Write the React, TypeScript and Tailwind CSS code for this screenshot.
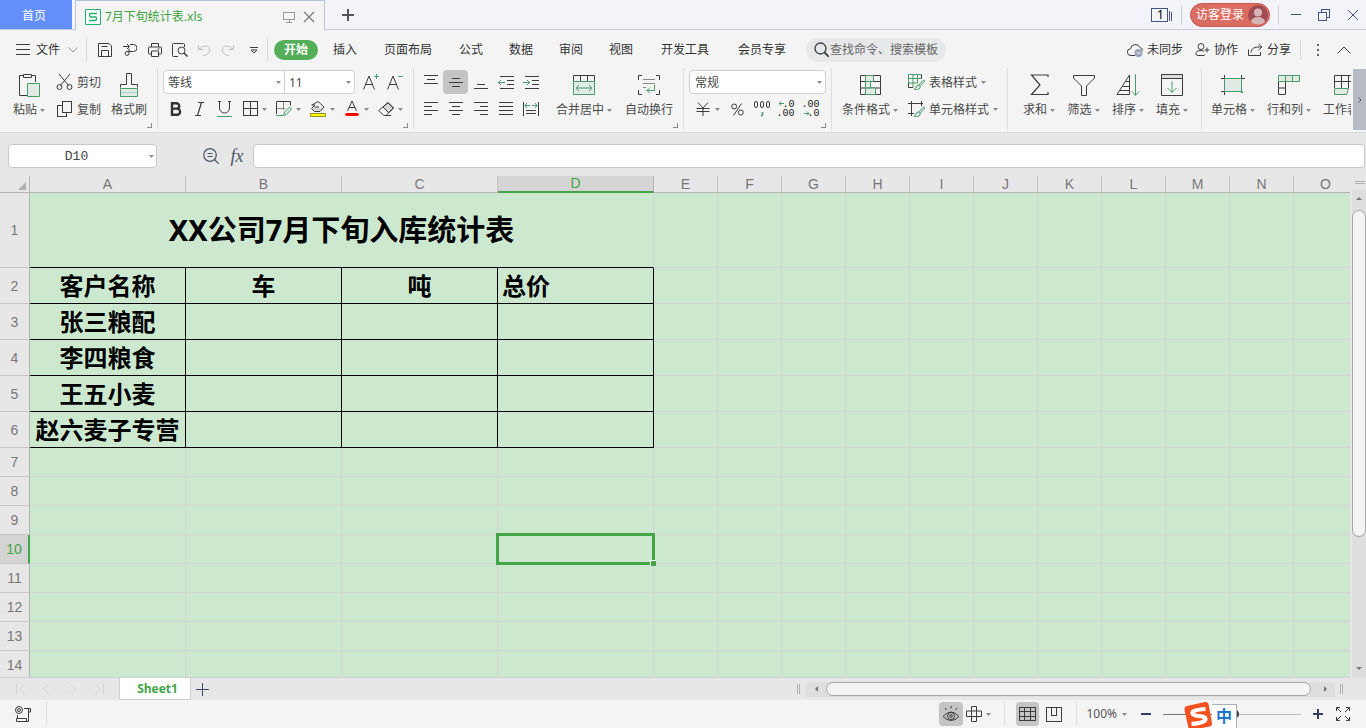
import React, { FC, ReactNode } from 'react';

import clsx from 'clsx';

const INK = '#3c3c3c';
const GREEN = '#4a9a6c';
const PALE = '#e1ebe5';

type SvgProps = {
  w: number;
  h: number;
  children: ReactNode;
  stroke?: string;
  crisp?: boolean;
  className?: string;
};

const Svg: FC<SvgProps> = ({
  w,
  h,
  children,
  stroke = INK,
  crisp,
  className,
}) => (
  <svg
    width={w}
    height={h}
    viewBox={`0 0 ${w} ${h}`}
    fill="none"
    stroke={stroke}
    shapeRendering={crisp ? 'crispEdges' : undefined}
    className={clsx('shrink-0', className)}
    aria-hidden="true"
  >
    {children}
  </svg>
);

const Caret: FC<{ className?: string }> = ({ className }) => (
  <Svg w={5} h={3} stroke="none" className={className}>
    <path d="M0 0h5L2.5 3z" fill="#8a8a8a" />
  </Svg>
);

const TitleBar = () => (
  <header className="flex h-[30px] shrink-0 border-b border-[#c5cbdc] bg-[#f2f4f9]">
    <button className="h-[29px] w-[72px] bg-[#638ffb] pt-[2px] pr-1 text-white">
      首页
    </button>
    <div className="ml-[3px] -mb-px flex h-[30px] w-[250px] items-center border-x border-t border-[#bcc3d6] bg-[#f4f4f4] pt-[3px] pr-2 pl-[9px]">
      <Svg w={16} h={16} stroke="#23b26d">
        <path d="M.5.5h15v15H.5z" fill="#fff" />
        <path
          d="M12 4.5H5.5Q4.5 4.5 4.5 6T5.5 8H10.5Q11.5 8 11.5 9.7T10.5 11.5H4"
          strokeWidth="1.4"
        />
      </Svg>
      <span className="ml-1 text-[#3fa33f]">7月下旬统计表.xls</span>
      <button aria-label="窗口" className="ml-auto">
        <Svg w={12} h={12} stroke="#999" crisp>
          <path d="M.5 1.5h11v7H.5zM6 9v2M3 11.5h6" />
        </Svg>
      </button>
      <button aria-label="关闭标签" className="ml-2 mr-px">
        <Svg w={12} h={12} stroke="#777">
          <path d="M1 1l10 10M11 1L1 11" strokeWidth="1.2" />
        </Svg>
      </button>
    </div>
    <button aria-label="新建" className="ml-[17px] pt-px">
      <Svg w={12} h={12} stroke="#555">
        <path d="M6 0v12M0 6h12" strokeWidth="2" shapeRendering="crispEdges" />
      </Svg>
    </button>
    <div className="ml-auto flex items-center pt-px">
      <button aria-label="窗口列表" className="relative">
        <Svg w={22} h={14} stroke="#44567f" crisp>
          <path d="M.5.5h16v13H.5zM18.5 3v10M20.5 4v9" />
        </Svg>
        <span className="absolute top-0 left-[6px] text-xs leading-[14px] text-black">
          1
        </span>
      </button>
      <i className="ml-2 h-5 w-px bg-[#cfcfd4]" />
      <button className="ml-2 flex h-6 w-20 items-center rounded-full border border-[#c9594f] bg-[#da6c61] pl-[5px] text-white">
        访客登录
        <Svg w={20} h={20} stroke="none" className="ml-1">
          <circle cx="10" cy="10" r="10" fill="#a04c52" />
          <circle cx="10" cy="7.5" r="4" fill="#d6b3b5" />
          <path d="M3 17a7 5 0 0 1 14 0a10 10 0 0 1-14 0z" fill="#d6b3b5" />
        </Svg>
      </button>
      <i className="ml-2 h-5 w-px bg-[#cfcfd4]" />
      <button aria-label="最小化" className="ml-3">
        <Svg w={10} h={12} stroke="#44567f" crisp>
          <path d="M0 5.5h10" />
        </Svg>
      </button>
      <button aria-label="还原" className="ml-[17px]">
        <Svg w={12} h={12} stroke="#44567f" crisp>
          <path d="M.5 3.5h8v8h-8zM3.5 3V.5h8v8H9" />
        </Svg>
      </button>
      <button aria-label="关闭" className="mr-[7px] ml-[17px]">
        <Svg w={12} h={12} stroke="#44567f">
          <path d="M1 1l10 10M11 1L1 11" />
        </Svg>
      </button>
    </div>
  </header>
);

const QuickTools = () => (
  <>
    <button aria-label="保存" className="w-[25px]">
      <Svg w={14} h={14}>
        <path d="M.5.5h10.5l2.5 2.5v10.5H.5zM3.5 13V7.5h7V13M3.5 3.5h6" />
      </Svg>
    </button>
    <button aria-label="输出为PDF" className="w-[25px]">
      <Svg w={14} h={14}>
        <path d="M0 3.5h6M4 1l2.5 2.5L4 6M7 1.5h3.5a3 3 0 0 1 0 7H4a2 2 0 1 0 2 2.5V5.5" />
      </Svg>
    </button>
    <button aria-label="打印" className="w-[25px]">
      <Svg w={14} h={14}>
        <path d="M3.5 4V.5h7V4M3.5 11H1.5q-1 0-1-1V5q0-1 1-1h11q1 0 1 1v5q0 1-1 1h-2M3.5 8h7v5.5h-7zM9.5 6h2" />
      </Svg>
    </button>
    <button aria-label="打印预览" className="w-[25px]">
      <Svg w={16} h={14}>
        <path d="M6 13.5H1.5q-1 0-1-1v-11q0-1 1-1h10q1 0 1 1V4" />
        <circle cx="9.5" cy="7.5" r="3.5" />
        <path d="M12 10l3.5 3.5" strokeWidth="1.5" />
      </Svg>
    </button>
    <button aria-label="撤销" className="w-6">
      <Svg w={12} h={12} stroke="#bdbdbd">
        <path d="M.5 1v4.5H5M1 5.5q3-4 7-3.5t3.5 4.5T5 12" />
      </Svg>
    </button>
    <button aria-label="恢复" className="w-6">
      <Svg w={12} h={12} stroke="#bdbdbd">
        <path d="M11.5 1v4.5H7M11 5.5Q8 1.5 4 2T.5 6.5 7 12" />
      </Svg>
    </button>
    <button aria-label="更多" className="ml-[10px] pr-2">
      <Svg w={8} h={8}>
        <path d="M0 1.5h8M1 4l3 3 3-3z" />
      </Svg>
    </button>
  </>
);

const MENU_ITEMS = [
  { label: '插入', width: 'w-[50px]' },
  { label: '页面布局', width: 'w-[76px]' },
  { label: '公式', width: 'w-[50px]' },
  { label: '数据', width: 'w-[50px]' },
  { label: '审阅', width: 'w-[50px]' },
  { label: '视图', width: 'w-[50px]' },
  { label: '开发工具', width: 'w-[78px]' },
  { label: '会员专享', width: 'w-[76px]' },
];

const MenuBar = () => (
  <nav className="flex h-[38px] shrink-0 items-center pt-px [&_button]:flex [&_button]:shrink-0 [&_button]:items-center [&_button]:justify-center">
    <button className="ml-4">
      <Svg w={14} h={11} crisp>
        <path d="M0 .5h14M0 5.5h14M0 10.5h14" />
      </Svg>
      <span className="ml-[6px]">文件</span>
      <Svg w={10} h={6} stroke="#999" className="ml-2">
        <path d="M.5.5L5 5 9.5.5" />
      </Svg>
    </button>
    <i className="ml-2 h-6 w-px bg-[#dadada]" />
    <div className="ml-[5px] flex">
      <QuickTools />
    </div>
    <i className="ml-px h-6 w-px bg-[#dadada]" />
    <button className="ml-[6px] h-5 w-11 rounded-full bg-[#54ae57] font-bold text-white">
      开始
    </button>
    <div className="ml-[2px] flex">
      {MENU_ITEMS.map(({ label, width }) => (
        <button key={label} className={width}>
          {label}
        </button>
      ))}
    </div>
    <label className="ml-[6px] flex h-6 w-[140px] shrink-0 items-center rounded-full bg-[#e6e8ea] pl-2">
      <Svg w={15} h={15}>
        <circle cx="6.5" cy="6.5" r="5.5" strokeWidth="1.3" />
        <path d="M10.5 10.5L15 15" strokeWidth="1.8" />
      </Svg>
      <input
        className="ml-px w-[112px] bg-transparent outline-none placeholder:text-[#666]"
        placeholder="查找命令、搜索模板"
        aria-label="查找命令、搜索模板"
      />
    </label>
    <div className="ml-auto flex items-center">
      <button>
        <Svg w={17} h={14}>
          <path d="M8 12.5H4a3.4 3.4 0 0 1-.5-6.8A5 5 0 0 1 13 4.5q2.5.5 2.5 3" />
          <circle cx="11.5" cy="10" r="4" fill="#98a3b8" stroke="none" />
          <path d="M9.5 10h4" stroke="#fff" />
        </Svg>
        <span className="ml-[3px]">未同步</span>
      </button>
      <button className="ml-3">
        <Svg w={15} h={13}>
          <circle cx="6" cy="3.5" r="3" />
          <path d="M9 8.500q-1-1-3-1-5 0-5 3 0 2 2 2h5q2 0 2-1M9.5 7h5M12 4.5v5" />
        </Svg>
        <span className="ml-1">协作</span>
      </button>
      <button className="ml-[10px]">
        <Svg w={15} h={13}>
          <path d="M.5 6.5v6h12V9M3 9.5q.5-5.5 7-5.5h3M10.5 1l3.5 3-3.5 3" />
        </Svg>
        <span className="ml-1">分享</span>
      </button>
      <i className="ml-[9px] h-5 w-px bg-[#dadada]" />
      <button aria-label="更多选项" className="ml-4">
        <Svg w={2} h={12} stroke="none">
          <path d="M0 0h2v2H0zM0 5h2v2H0zM0 10h2v2H0z" fill="#666" />
        </Svg>
      </button>
      <button aria-label="收起功能区" className="mr-[15px] ml-[18px]">
        <Svg w={14} h={8}>
          <path d="M.5 7.5L7 1l6.500 6.500" />
        </Svg>
      </button>
    </div>
  </nav>
);

const Group: FC<{
  children: ReactNode;
  className: string;
  launcher?: string;
}> = ({ children, className, launcher }) => (
  <div
    className={clsx(
      'relative flex h-[62px] shrink-0 items-start border-r border-[#dedede] pt-[2px]',
      className,
    )}
  >
    {children}
    {launcher && (
      <button aria-label={launcher} className="absolute right-[5px] bottom-[2px]">
        <Svg w={5} h={5} stroke="#8a8a8a" crisp>
          <path d="M4.5 0v4.5H0" />
        </Svg>
      </button>
    )}
  </div>
);

const BigButton: FC<{
  icon: ReactNode;
  label: string;
  caret?: boolean;
  className: string;
}> = ({ icon, label, caret, className }) => (
  <button className={clsx('flex shrink-0 flex-col items-center', className)}>
    <span className="flex h-[30px] items-center">{icon}</span>
    <span className="flex items-center gap-[3px] pt-[2px] leading-4 whitespace-nowrap">
      {label}
      {caret && <Caret />}
    </span>
  </button>
);

const Tool: FC<{
  name: string;
  children: ReactNode;
  caret?: boolean;
  className?: string;
  active?: boolean;
}> = ({ name, children, caret, className, active }) => (
  <button
    aria-label={name}
    className={clsx(
      'flex h-6 shrink-0 items-center rounded-sm',
      caret ? 'gap-1' : 'justify-center',
      active && 'bg-[#c4c4c4]',
      className,
    )}
  >
    {children}
    {caret && <Caret />}
  </button>
);

const LabelTool: FC<{
  icon: ReactNode;
  label: string;
  caret?: boolean;
}> = ({ icon, label, caret }) => (
  <button className="flex h-6 items-center gap-1 whitespace-nowrap">
    {icon}
    <span className="pt-px">{label}</span>
    {caret && <Caret />}
  </button>
);

const Select: FC<{ name: string; value: string; className: string }> = ({
  name,
  value,
  className,
}) => (
  <span className={clsx('relative flex items-center', className)}>
    <select
      aria-label={name}
      className="h-full w-full appearance-none bg-transparent pt-[2px] pl-1 outline-none"
    >
      <option>{value}</option>
    </select>
    <Caret className="pointer-events-none absolute right-[3px]" />
  </span>
);

type AlignTool = {
  name: string;
  d: string;
  green?: string;
  active?: boolean;
};

const ALIGN_ROWS: AlignTool[][] = [
  [
    { name: '顶端对齐', d: 'M0 1.5h14M3 5.5h8M0 9.5h14' },
    { name: '垂直居中', d: 'M3 4.5h8M0 8.5h14M3 12.5h8', active: true },
    { name: '底端对齐', d: 'M3 10.5h8M0 14.5h14' },
    {
      name: '减少缩进量',
      d: 'M2 2.5h14M9 6.5h7M9 10.5h7M2 14.5h14',
      green: 'M0 8.5h7M3 6L.5 8.5 3 11',
    },
    {
      name: '增加缩进量',
      d: 'M2 2.5h14M9 6.5h7M9 10.5h7M2 14.5h14',
      green: 'M0 8.5h7M4 6l2.5 2.5L4 11',
    },
  ],
  [
    { name: '左对齐', d: 'M0 1.5h14M0 5.5h8M0 9.5h14M0 13.5h8' },
    { name: '水平居中', d: 'M0 1.5h14M3 5.5h8M0 9.5h14M3 13.5h8' },
    { name: '右对齐', d: 'M0 1.5h14M6 5.5h8M0 9.5h14M6 13.5h8' },
    { name: '两端对齐', d: 'M0 1.5h14M0 5.5h14M0 9.5h14M0 13.5h14' },
    {
      name: '分散对齐',
      d: 'M.5 1v14M15.5 1v14M3 9.5h10M3 12.5h10',
      green: 'M2 4.5h5M4 2L2 4.5 4 7M9 4.5h5M12 2l2 2.5L12 7',
    },
  ],
];

const PasteIcon = () => (
  <Svg w={22} h={24}>
    <path d="M5 2.5H1.5v20H9M14 2.5h3.5V9" />
    <path d="M5.5 1.5h8v3h-8z" />
    <path d="M9.5 10.5h12v13h-12z" fill={PALE} stroke={GREEN} />
  </Svg>
);

const PainterIcon = () => (
  <Svg w={20} h={24}>
    <path d="M1.5 14.5v-3h6V.5h5v11h6v3" />
    <path d="M1.5 15.5h17v8h-17z" fill={PALE} stroke={GREEN} />
    <path d="M2 19.5h16" stroke={GREEN} strokeOpacity=".3" />
  </Svg>
);

const ClipboardGroup = () => (
  <Group className="pr-[5px] pl-2" launcher="剪贴板">
    <BigButton icon={<PasteIcon />} label="粘贴" caret className="w-[42px]" />
    <div className="ml-[6px] flex w-[50px] flex-col gap-[3px]">
      <LabelTool
        label="剪切"
        icon={
          <Svg w={17} h={16}>
            <path d="M3 0l9.5 11.5M14 0L4.5 11.5" />
            <circle cx="3.5" cy="13" r="2.5" />
            <circle cx="13.5" cy="13" r="2.5" />
          </Svg>
        }
      />
      <LabelTool
        label="复制"
        icon={
          <Svg w={17} h={16} crisp>
            <path d="M6.5.5h9v11h-9zM6 4.5H1.500v11h9V12" />
          </Svg>
        }
      />
    </div>
    <BigButton icon={<PainterIcon />} label="格式刷" className="w-[46px]" />
  </Group>
);

const FontGroup = () => (
  <Group className="pr-px pl-[5px]" launcher="字体设置">
    <div className="flex flex-col gap-[3px]">
      <div className="flex">
        <div className="flex h-6 w-[192px] rounded border border-[#cfcfcf] bg-white">
          <Select
            name="字体"
            value="等线"
            className="w-[121px] border-r border-[#cfcfcf]"
          />
          <Select name="字号" value="11" className="w-[69px]" />
        </div>
        <Tool name="增大字号" className="ml-1 w-6">
          <Svg w={16} h={16}>
            <path d="M.5 15.5L6 2l5.5 13.5M2.5 10.5h7" />
            <path d="M13.5 0v5M11 2.5h5" stroke={GREEN} />
          </Svg>
        </Tool>
        <Tool name="减小字号" className="w-6">
          <Svg w={16} h={16}>
            <path d="M.5 15.5L6 2l5.5 13.5M2.5 10.5h7" />
            <path d="M11 2.5h5" stroke={GREEN} />
          </Svg>
        </Tool>
      </div>
      <div className="flex pl-px">
        <Tool name="加粗" className="w-6">
          <Svg w={12} h={14} stroke="#333">
            <path
              d="M2 1.200h4.500a2.700 2.700 0 0 1 0 5.400H2zM2 6.600h5a3 3 0 0 1 0 6.200H2z"
              strokeWidth="2.4"
            />
          </Svg>
        </Tool>
        <Tool name="倾斜" className="w-6">
          <Svg w={10} h={14}>
            <path d="M3 .5h6M0 13.5h6M6.5.5l-4 13" strokeWidth="1.2" />
          </Svg>
        </Tool>
        <Tool name="下划线" className="w-[25px]">
          <Svg w={15} h={16}>
            <path d="M2.500 0v7a5 5 0 0 0 10 0V0M1 .5h3M11 .5h3" />
            <path d="M0 15.5h15" stroke={GREEN} />
          </Svg>
        </Tool>
        <Tool name="边框" caret className="ml-[5px] w-[34px]">
          <Svg w={16} h={16} crisp>
            <path d="M1.5.5h14v14h-14zM8.5 0v15M1 7.5h15" />
          </Svg>
        </Tool>
        <Tool name="绘制边框" caret className="w-[34px]">
          <Svg w={16} h={16}>
            <path d="M.5 13V.5h14v4" />
            <path d="M7.500 1v8M1 7.5h8" stroke="#888" />
            <path
              d="M0 14.5h7M7.500 14.500l1-3.500L13.5 6l2 2-5 5.500z"
              stroke={GREEN}
              fill={PALE}
            />
          </Svg>
        </Tool>
        <Tool name="填充颜色" caret className="w-[34px]">
          <Svg w={16} h={16}>
            <path d="M4 6.500h9.500L10.500 10H4.500L2 7.500z" fill="#d6d6d6" stroke="none" />
            <path d="M2 4L8 .5 14 6l-4 4.500H4.500L1.500 7.500 5 4H1.500M4.500 6H9" />
            <path d="M.5 12.5h15v3H.5z" fill="#ff0" stroke="#8f8f2c" />
          </Svg>
        </Tool>
        <Tool name="字体颜色" caret className="w-[34px]">
          <Svg w={16} h={16}>
            <path d="M3.500 10L8 0l4.500 10M5 6.500h6" />
            <path d="M2.500 12.500h11q1 0 1 1t-1 1h-11q-1 0-1-1t1-1z" fill="#f00" stroke="#f00" />
          </Svg>
        </Tool>
        <Tool name="清除" caret className="w-[34px]">
          <Svg w={16} h={16}>
            <path d="M5 6l5-4.500L15.500 7 10 12" fill="#d8d8d8" />
            <path d="M10 1.500L.8 9.500l5 5H8L15.500 7zM5 6l5.500 5.500" />
            <path d="M7 14.500h6" />
          </Svg>
        </Tool>
      </div>
    </div>
  </Group>
);

const AlignGroup = () => (
  <Group className="pr-[6px] pl-1" launcher="对齐方式">
    <div className="flex flex-col gap-[3px]">
      {ALIGN_ROWS.map((row, i) => (
        <div key={i} className="flex">
          {row.map(({ name, d, green, active }) => (
            <Tool key={name} name={name} active={active} className="w-[25px]">
              <Svg w={green ? 16 : 14} h={16}>
                <path d={d} shapeRendering="crispEdges" />
                {green && <path d={green} stroke={GREEN} />}
              </Svg>
            </Tool>
          ))}
        </div>
      ))}
    </div>
    <BigButton
      className="ml-2 w-[66px]"
      label="合并居中"
      caret
      icon={
        <Svg w={22} h={20}>
          <path d="M.5 6V.5h21V6M7.5.5V6M14.5.5V6" />
          <path d="M.5 6.5h21v13H.5z" fill={PALE} stroke={GREEN} />
          <path d="M3 13h16M6 10l-3 3 3 3M16 10l3 3-3 3" stroke={GREEN} />
        </Svg>
      }
    />
    <BigButton
      className="ml-1 w-[56px]"
      label="自动换行"
      icon={
        <Svg w={22} h={20}>
          <path d="M4 .5H.5V5M18 .5h3.500V5M4 19.500H.5V15M18 19.500h3.500V15" />
          <path d="M5 4.500h12M5 8.500h12M5 12.500h3" stroke="#888" />
          <path d="M16.500 10v5.500H9M12 12.500l-3 3 3 3" stroke={GREEN} />
        </Svg>
      }
    />
  </Group>
);

const NumberTool: FC<{
  name: string;
  top: string;
  bottom: string;
  arrow: string;
}> = ({ name, top, bottom, arrow }) => (
  <Tool name={name} className="w-[25px]">
    <span className="relative flex w-4 flex-col items-end font-['Liberation_Mono'] text-[10px] leading-[9px] text-[#222]">
      <span>{top}</span>
      <span>{bottom}</span>
      <Svg w={16} h={18} stroke={GREEN} className="absolute top-0 left-0">
        <path d={arrow} />
      </Svg>
    </span>
  </Tool>
);

const NumberGroup = () => (
  <Group className="pr-[5px] pl-[5px]" launcher="数字格式">
    <div className="flex flex-col gap-[3px]">
      <div className="flex h-6 w-[137px] rounded border border-[#cfcfcf] bg-white">
        <Select name="数字格式" value="常规" className="w-full pl-px" />
      </div>
      <div className="flex">
        <Tool name="货币" caret className="ml-[6px] w-[30px]">
          <Svg w={16} h={14}>
            <path d="M3 .5l5 5.5 5-5.5M1.5 6.5h13M1.5 9.5h13M8 6v8" />
          </Svg>
        </Tool>
        <Tool name="百分比" className="w-6">
          <Svg w={13} h={13}>
            <circle cx="3.2" cy="3.5" r="2.5" />
            <circle cx="9.8" cy="9.5" r="2.5" />
            <path d="M10.5.5l-8 12" />
          </Svg>
        </Tool>
        <Tool name="千位分隔" className="w-[25px]">
          <Svg w={18} h={16}>
            <rect x="1.5" y=".5" width="3" height="6" rx="1.5" />
            <rect x="7.5" y=".5" width="3" height="6" rx="1.5" />
            <rect x="13.5" y=".5" width="3" height="6" rx="1.5" />
            <path d="M9.5 11v2q0 1.5-1.5 2" stroke={GREEN} strokeWidth="1.6" />
          </Svg>
        </Tool>
        <NumberTool
          name="增加小数位"
          top=".0"
          bottom=".00"
          arrow="M0 3.5h5M2 1.5l-2 2 2 2"
        />
        <NumberTool
          name="减少小数位"
          top=".00"
          bottom=".0"
          arrow="M0 13.5h5M3 11.5l2 2-2 2"
        />
      </div>
    </div>
  </Group>
);

const Brush = () => (
  <>
    <path
      d="M15.5 6l-5 5 1.5 1.5 4.5-5q.5-1.5-1-1.500z"
      fill={PALE}
      stroke={GREEN}
    />
    <path
      d="M10.5 11q-2 0-2.5 2t-2 2.5q3 1 5-.5 1.500-1 1-2.500z"
      fill={PALE}
      stroke={GREEN}
    />
  </>
);

const StyleGroup = () => (
  <Group className="pr-[7px] pl-[6px]">
    <BigButton
      className="w-16"
      label="条件格式"
      caret
      icon={
        <Svg w={21} h={20}>
          <path d="M.5.5h20v19H.5zM.5 6.5h20M.5 13h20M6.5.5v6M13.5.5v6M10.5 6.5V13" />
          <path
            d="M5.5.5h8v6h-8zM5.5 6.5H10.5V13H5.5zM5.5 13h10v6.5h-10z"
            fill={PALE}
            stroke={GREEN}
          />
        </Svg>
      }
    />
    <div className="ml-[6px] flex w-[92px] flex-col gap-[3px]">
      <LabelTool
        label="表格样式"
        caret
        icon={
          <Svg w={17} h={16}>
            <path d="M13.5 5V.5M.5 5v8.5H5" />
            <path
              d="M.5 9V.5h9V9zM.5 4.5h13M5 .5V13M9.5.5h4"
              stroke={GREEN}
              fill="none"
            />
            <Brush />
          </Svg>
        }
      />
      <LabelTool
        label="单元格样式"
        caret
        icon={
          <Svg w={17} h={16}>
            <path d="M0 2.5h15M3.5 0v15M13.5 0v5M0 12.5h6" />
            <Brush />
          </Svg>
        }
      />
    </div>
  </Group>
);

const EditGroup = () => (
  <Group className="pr-[7px] pl-[9px]">
    <BigButton
      className="w-11"
      label="求和"
      caret
      icon={
        <Svg w={19} h={22}>
          <path d="M18 3V1H1.5L10 11 1.5 20.5H18V18" strokeWidth="1.2" />
        </Svg>
      }
    />
    <BigButton
      className="w-[45px]"
      label="筛选"
      caret
      icon={
        <Svg w={22} h={22}>
          <path d="M.5 1.5h21V4L13.5 12v9.5h-5V12L.5 4z" />
        </Svg>
      }
    />
    <BigButton
      className="w-11"
      label="排序"
      caret
      icon={
        <Svg w={24} h={22}>
          <path d="M13.5 1v19.5H1zM10 7.5h3.5M6.5 12.5h7M4 16.5h9.5" />
          <path d="M19.5 0v21M16 17.5l3.5 4 3.5-4" stroke={GREEN} />
        </Svg>
      }
    />
    <BigButton
      className="w-11"
      label="填充"
      caret
      icon={
        <Svg w={22} h={22}>
          <path d="M.5.5h21v21H.5z" />
          <path d="M.5.5h21v4H.5z" fill="#dcdcdc" />
          <path d="M11 7.5v11M6.5 14l4.5 4.5 4.5-4.5" stroke={GREEN} />
        </Svg>
      }
    />
  </Group>
);

const CellsGroup = () => (
  <Group className="pl-[3px]">
    <BigButton
      className="w-14"
      label="单元格"
      caret
      icon={
        <Svg w={24} h={20}>
          <path d="M0 3.5h24M3.5 0v20M20.5 0v14M0 16.5h4" />
          <path d="M3.5 3.5h17v13h-17z" fill={PALE} stroke={GREEN} />
          <path d="M20 16h2v2h-2z" fill={GREEN} stroke="none" />
        </Svg>
      }
    />
    <BigButton
      className="w-14"
      label="行和列"
      caret
      icon={
        <Svg w={22} h={20}>
          <path d="M.5 7v12.5h7V7M.5 13h7" />
          <path
            d="M.5.5h21v6H.5zM7.5.5v6M14.5.5v6"
            fill={PALE}
            stroke={GREEN}
          />
        </Svg>
      }
    />
    <BigButton
      className="w-14"
      label="工作表"
      caret
      icon={
        <Svg w={22} h={20}>
          <path d="M.5 13V.5h21V13M.5 6.5h21M7.5.5V13M14.5.5V13" />
          <path d="M.5 13.5h14l-2 6H.5z" fill={PALE} stroke={GREEN} />
        </Svg>
      }
    />
  </Group>
);

const Ribbon = () => (
  <section className="flex h-[65px] shrink-0 border-b border-[#dadada] text-[#4a4a4a]">
    <div className="flex min-w-0 flex-1 overflow-hidden">
      <ClipboardGroup />
      <FontGroup />
      <AlignGroup />
      <NumberGroup />
      <StyleGroup />
      <EditGroup />
      <CellsGroup />
    </div>
    <button
      aria-label="向右滚动"
      className="mt-px ml-[2px] flex h-[61px] w-[13px] items-center justify-center bg-[#b8bbc4]"
    >
      <Svg w={4} h={6} stroke="#555">
        <path d="M.5.5L3 3 .5 5.5" />
      </Svg>
    </button>
  </section>
);

const FormulaBar = () => (
  <section className="flex h-[43px] shrink-0 items-center bg-[#e7e7e7] pt-1 pr-px pb-px pl-2">
    <div className="relative flex h-6 w-[149px] items-center rounded border border-[#c9c9c9] bg-white">
      <input
        aria-label="名称框"
        defaultValue="D10"
        className="w-full bg-transparent pt-[2px] pr-3 text-center font-['Liberation_Mono'] text-[13px] text-[#444] outline-none"
      />
      <Caret className="absolute right-[2px]" />
    </div>
    <button aria-label="查找" className="ml-[46px]">
      <Svg w={16} h={16} stroke="#4b5568">
        <circle cx="7" cy="7" r="6.3" strokeWidth="1.2" />
        <path
          d="M4.5 5.5h5M4.5 8.5h5M11.5 11.5L16 16"
          strokeWidth="1.2"
        />
      </Svg>
    </button>
    <button
      aria-label="插入函数"
      className="ml-[9px] w-[18px] font-['Liberation_Serif'] text-lg leading-5 text-[#4b5568] italic"
    >
      fx
    </button>
    <input
      aria-label="编辑栏"
      className="ml-[7px] h-6 min-w-0 flex-1 rounded border border-[#c9c9c9] bg-white px-2 outline-none"
    />
  </section>
);

const COLUMNS = 'ABCDEFGHIJKLMNO'.split('');
const TABLE_COLUMNS = 4;
const SELECTED = { row: 10, column: 3 };

const SHEET: Record<number, string[]> = {
  2: ['客户名称', '车', '吨', '总价'],
  3: ['张三粮配'],
  4: ['李四粮食'],
  5: ['王五小麦'],
  6: ['赵六麦子专营'],
};

const SelectionFrame = () => (
  <span className="absolute -inset-[2px] z-10 border-[3px] border-[#43a547]">
    <span className="absolute -right-1 -bottom-1 size-[6px] border-t border-l border-white bg-[#43a547]" />
  </span>
);

const SheetRow: FC<{ row: number }> = ({ row }) => {
  const selected = row === SELECTED.row;
  const hasData = row >= 2 && row <= 6;

  return (
    <tr className={row === 1 ? 'h-[75px]' : hasData ? 'h-9' : 'h-[29px]'}>
      <th
        className={clsx(
          "border-b p-0 font-['Liberation_Sans'] text-sm font-normal",
          selected
            ? 'border-r-2 border-r-[#43a547] border-b-[#c6c6c6] bg-[#d4d4d4] text-[#43a547]'
            : 'border-r border-r-[#b4b4b4] border-b-[#c6c6c6] bg-[#e7e7e7] text-[#777]',
        )}
      >
        {row}
      </th>
      {COLUMNS.map((column, i) => {
        if (row === 1 && i > 0 && i < TABLE_COLUMNS) {
          return null;
        }
        const inTable = hasData && i < TABLE_COLUMNS;
        const isTitle = row === 1 && i === 0;

        return (
          <td
            key={column}
            colSpan={isTitle ? TABLE_COLUMNS : undefined}
            className={clsx(
              'relative border-r border-b p-0 whitespace-nowrap text-black',
              inTable && 'border-black text-2xl leading-8 font-bold',
              inTable && (i === 3 ? 'pl-1 text-left' : 'text-center'),
              isTitle &&
                'border-r-[#d2d3d2] border-b-black text-center text-[29px] font-bold',
              !inTable && !isTitle && 'border-[#d2d3d2]',
            )}
          >
            {isTitle ? 'XX公司7月下旬入库统计表' : SHEET[row]?.[i]}
            {selected && i === SELECTED.column && <SelectionFrame />}
          </td>
        );
      })}
    </tr>
  );
};

const Sheet = () => (
  <main className="flex min-h-0 flex-1 bg-[#e7e7e7]">
    <div className="min-w-0 flex-1 overflow-hidden border-b border-[#d0d0d0] bg-[#cce8cf]">
      <table className="w-px table-fixed border-separate border-spacing-0">
        <colgroup>
          <col className="w-[30px]" />
          {COLUMNS.map((column, i) => (
            <col
              key={column}
              className={i < TABLE_COLUMNS ? 'w-[156px]' : 'w-16'}
            />
          ))}
        </colgroup>
        <thead className="font-['Liberation_Sans'] text-sm leading-[15px]">
          <tr className="h-[17px]">
            <th className="border-r border-b border-[#b4b4b4] bg-[#e7e7e7] p-0">
              <Svg w={8} h={8} stroke="none" className="mt-1 ml-[18px]">
                <path d="M8 0v8H0z" fill="#b0b0b0" />
              </Svg>
            </th>
            {COLUMNS.map((column, i) => (
              <th
                key={column}
                className={clsx(
                  'p-0 font-normal',
                  i === SELECTED.column
                    ? 'border-r border-b-2 border-r-[#b4b4b4] border-b-[#43a547] bg-[#d4d4d4] text-[#43a547]'
                    : 'border-r border-b border-r-[#c2c2c2] border-b-[#b4b4b4] bg-[#e7e7e7] text-[#777]',
                )}
              >
                {column}
              </th>
            ))}
          </tr>
        </thead>
        <tbody>
          {Array.from({ length: 14 }, (_, i) => (
            <SheetRow key={i} row={i + 1} />
          ))}
        </tbody>
      </table>
    </div>
    <div className="flex w-4 flex-col items-end">
      <Svg w={12} h={14} stroke="#b0b0b0" crisp>
        <path d="M1 5.5h10M1 7.5h10" />
      </Svg>
      <div className="flex min-h-0 w-[14px] flex-1 flex-col items-center bg-[#dedede]">
        <button
          aria-label="向上滚动"
          className="flex h-5 items-center pb-[3px]"
        >
          <Svg w={6} h={3} stroke="none">
            <path d="M3 0l3 3H0z" fill="#777" />
          </Svg>
        </button>
        <div className="min-h-0 w-[14px] flex-1">
          <div className="h-[73%] rounded-full border border-[#a6a6a6] bg-[#f4f4f4]" />
        </div>
        <button aria-label="向下滚动" className="flex h-5 items-center">
          <Svg w={6} h={3} stroke="none">
            <path d="M0 0h6L3 3z" fill="#777" />
          </Svg>
        </button>
      </div>
    </div>
  </main>
);

const SHEET_NAV = [
  { name: '第一张', d: 'M.5 0v12M9 1L3.5 6 9 11' },
  { name: '上一张', d: 'M7 1L1.5 6 7 11' },
  { name: '下一张', d: 'M2 1l5.5 5L2 11' },
  { name: '最后一张', d: 'M1 1l5.5 5L1 11M9.5 0v12' },
];

const SheetTabs = () => (
  <section className="flex h-[22px] shrink-0 items-center bg-[#e7e7e7]">
    <div className="ml-4 flex gap-4">
      {SHEET_NAV.map(({ name, d }) => (
        <button key={name} aria-label={name}>
          <Svg w={10} h={12} stroke="#d6d6d6">
            <path d={d} />
          </Svg>
        </button>
      ))}
    </div>
    <button className="ml-[15px] h-[22px] w-[72px] border border-t-0 border-[#cfcfcf] bg-white pt-px pl-[5px] font-['Open_Sans'] font-bold text-[#43a547]">
      Sheet1
    </button>
    <button aria-label="新建工作表" className="ml-[5px]">
      <Svg w={13} h={13} stroke="#3b4a6b" crisp>
        <path d="M6.5 0v13M0 6.5h13" />
      </Svg>
    </button>
    <div className="ml-auto flex w-[569px] items-center">
      <i className="h-[10px] w-[3px] border-x border-[#b0b0b0]" />
      <div className="ml-[6px] flex h-[15px] flex-1 items-center bg-[#dedede]">
        <button aria-label="向左滚动" className="flex w-5 justify-center">
          <Svg w={3} h={6} stroke="none">
            <path d="M3 0v6L0 3z" fill="#777" />
          </Svg>
        </button>
        <div className="h-[14px] flex-1 rounded-full border border-[#a6a6a6] bg-[#f4f4f4]" />
        <button
          aria-label="向右滚动工作表"
          className="flex w-6 justify-end pr-2"
        >
          <Svg w={3} h={6} stroke="none">
            <path d="M0 0l3 3-3 3z" fill="#777" />
          </Svg>
        </button>
      </div>
      <i className="mr-[23px] ml-[5px] h-[10px] w-[3px] border-x border-[#b0b0b0]" />
    </div>
  </section>
);

const ImeBadge = () => (
  <div className="absolute -top-[13px] left-[21px] flex items-start">
    <Svg w={28} h={28} stroke="none">
      <path
        d="M3 5L21 1q3-.5 3.500 2L28 22q.5 3-2.500 3.500L8 29q-3 .5-3.500-2L.5 9Q0 5.500 3 5z"
        fill="#f4511e"
      />
      <path
        d="M21.500 8Q7 9 8.500 12.500q.5 2 6.500 2.500 6.500.5 6.500 3 0 4-14 5"
        stroke="#fff"
        strokeWidth="4.200"
        fill="none"
      />
    </Svg>
    <span className="mt-[3px] flex h-6 w-[25px] items-center justify-center border-t border-r border-[#a9acb6] bg-white text-base leading-4 font-bold text-[#1c75cc]">
      中
    </span>
  </div>
);

const StatusBar = () => (
  <footer className="flex h-7 shrink-0 items-center overflow-hidden bg-[#f4f4f4] text-[#555] [&_button]:flex [&_button]:shrink-0 [&_button]:items-center [&_button]:justify-center">
    <button aria-label="录制宏" className="ml-[15px]">
      <Svg w={16} h={16}>
        <circle cx="4" cy="4" r="3.5" />
        <circle cx="4" cy="4" r="1.5" />
        <path d="M9 2.5h6.5V6H13M13.5 3v12.5H1.5v-3h10v3M2.5 9v3" />
      </Svg>
    </button>
    <i className="ml-[15px] h-6 w-px bg-[#dedede]" />
    <div className="ml-auto flex items-center">
      <button aria-label="护眼模式" className="h-6 w-6 rounded bg-[#c4c4c4]">
        <Svg w={18} h={18}>
          <path d="M1 11.5q8-9 16 0-8 8-16 0zM3 3l1.5 2M9 1v2.5M15 3l-1.5 2" />
          <circle cx="9" cy="11" r="3.5" />
          <circle cx="9" cy="11" r="1.3" />
        </Svg>
      </button>
      <button aria-label="阅读模式" className="ml-[3px] gap-1">
        <Svg w={16} h={16}>
          <path d="M5.5.5h5v4.500h5v5.500h-5v5h-5v-5H.5V5h5zM5.5 5h5v5.500h-5z" />
        </Svg>
        <Caret />
      </button>
      <i className="ml-[13px] h-6 w-px bg-[#dedede]" />
      <button
        aria-label="普通视图"
        className="ml-[11px] h-6 w-[23px] rounded bg-[#c4c4c4]"
      >
        <Svg w={17} h={14} crisp>
          <path d="M.5.5h16v13H.5zM5.5 0v14M11.5 0v14M0 4.5h17M0 9.5h17" />
        </Svg>
      </button>
      <button aria-label="分页预览" className="ml-[7px]">
        <Svg w={16} h={15} crisp>
          <path d="M.5.5h15v14H.5zM5.5 0v8.5h5V0" />
        </Svg>
      </button>
      <i className="ml-[14px] h-6 w-px bg-[#dedede]" />
      <button className="ml-[9px] gap-[5px]">
        100%
        <Caret />
      </button>
      <button aria-label="缩小" className="ml-[14px]">
        <Svg w={10} h={2} stroke="none">
          <path d="M0 0h10v2H0z" fill="#33415f" />
        </Svg>
      </button>
      <div className="relative ml-3 flex w-[138px] items-center">
        <input
          type="range"
          aria-label="显示比例"
          defaultValue={52}
          className="h-px w-full appearance-none bg-linear-to-r from-[#777] from-50% to-[#bbb] to-50% [&::-webkit-slider-thumb]:h-2 [&::-webkit-slider-thumb]:w-2 [&::-webkit-slider-thumb]:appearance-none [&::-webkit-slider-thumb]:rounded-full [&::-webkit-slider-thumb]:bg-[#33415f]"
        />
        <ImeBadge />
      </div>
      <button aria-label="放大" className="ml-3">
        <Svg w={10} h={10} stroke="none">
          <path d="M4 0h2v4h4v2H6v4H4V6H0V4h4z" fill="#33415f" />
        </Svg>
      </button>
      <button aria-label="全屏" className="mr-4 ml-[13px]">
        <Svg w={14} h={14}>
          <path d="M.5 4V.5H4M.5.5l4.5 4.5M10 .5h3.5V4M13.5.5L9 5M.5 10v3.5H4M.5 13.5L5 9M10 13.5h3.5V10M13.5 13.5L9 9" />
        </Svg>
      </button>
    </div>
  </footer>
);

const App = () => (
  <div className="flex h-screen flex-col overflow-hidden bg-[#f4f4f4] font-['Noto_Sans','Noto_Sans_CJK_SC',sans-serif] text-xs text-[#333]">
    <TitleBar />
    <MenuBar />
    <Ribbon />
    <FormulaBar />
    <Sheet />
    <SheetTabs />
    <StatusBar />
  </div>
);

export default App;
